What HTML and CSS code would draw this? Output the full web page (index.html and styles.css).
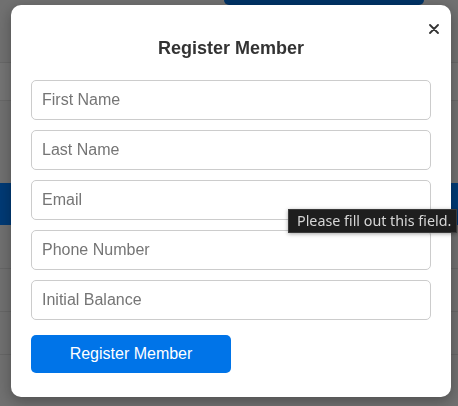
FILE: index.html
```html
<!DOCTYPE html>
<html>
<head>
<meta charset="utf-8">
<link rel="stylesheet" href="styles.css">
</head>
<body>
<div class="page">
  <div class="topbar"><div class="topbtn"></div></div>
  <div class="row-light"></div>
  <div class="gap-area"></div>
  <div class="band"></div>
  <div class="trow"><div class="cell"></div><div class="cell"></div></div>
  <div class="trow"><div class="cell"></div><div class="cell"></div></div>
  <div class="trow"><div class="cell"></div><div class="cell"></div></div>
  <div class="trow"><div class="cell"></div><div class="cell"></div></div>
</div>
<div class="overlay">
  <div class="modal">
    <button class="close" aria-label="Close">
      <svg width="10" height="10" viewBox="0 0 10 10"><path d="M1 1 L9 9 M9 1 L1 9" stroke="#333" stroke-width="1.8" stroke-linecap="round"/></svg>
    </button>
    <h2 class="title">Register Member</h2>
    <form class="form">
      <input class="field" type="text" placeholder="First Name">
      <input class="field" type="text" placeholder="Last Name">
      <input class="field" type="email" placeholder="Email">
      <input class="field" type="text" placeholder="Phone Number">
      <input class="field" type="text" placeholder="Initial Balance">
      <button type="button" class="submit">Register Member</button>
    </form>
  </div>
  <div class="tooltip">Please fill out this field.</div>
</div>
</body>
</html>
```
FILE: styles.css
```css
* { box-sizing: border-box; }
html, body { margin: 0; padding: 0; }
body {
  width: 458px;
  height: 406px;
  overflow: hidden;
  background: #e0e0e0;
  font-family: "Liberation Sans", Arial, sans-serif;
}
.page { width: 458px; height: 406px; overflow: hidden; }
.topbar { height: 62px; }
.topbtn {
  margin-left: 224px;
  width: 200px;
  height: 5px;
  background: #0066cc;
  border-radius: 0 0 6px 6px;
}
.row-light {
  height: 39px;
  border-top: 1px solid #cfcfcf;
  border-bottom: 1px solid #cfcfcf;
  background: #e8e8e8;
}
.gap-area { height: 82px; }
.band { height: 42px; background: #0074ea; }
.trow {
  display: grid;
  grid-template-columns: 292px 1fr;
  height: 43px;
  border-top: 1px solid #cccccc;
}
.band + .trow { border-top: none; }
.cell:first-child { border-right: 1px solid #1a1a1a; }
.overlay {
  position: fixed;
  inset: 0;
  background: rgba(0, 0, 0, 0.5);
}
.modal {
  position: absolute;
  left: 11px;
  top: 5px;
  width: 440px;
  height: 392px;
  background: #fff;
  border-radius: 10px;
  padding: 0 20px;
  box-shadow: 0 4px 14px rgba(0, 0, 0, 0.3);
}
.close {
  position: absolute;
  top: 19px;
  right: 12px;
  width: 10px;
  height: 10px;
  padding: 0;
  border: none;
  background: none;
  display: flex;
}
.title {
  margin: 33px 0 21px;
  font-size: 18px;
  line-height: 21px;
  font-weight: bold;
  color: #333;
  text-align: center;
}
.form { display: flex; flex-direction: column; gap: 10px; }
.field {
  width: 400px;
  height: 40px;
  border: 1px solid #cccccc;
  border-radius: 5px;
  padding: 0 10px;
  font-family: "Liberation Sans", Arial, sans-serif;
  font-size: 16px;
  color: #333;
  background: #fff;
}
.field::placeholder { color: #757575; }
.submit {
  margin-top: 5px;
  width: 200px;
  height: 38px;
  border: none;
  border-radius: 5px;
  background: #0074e8;
  color: #fff;
  font-family: "Liberation Sans", Arial, sans-serif;
  font-size: 16px;
}
.tooltip {
  position: absolute;
  left: 288px;
  top: 209px;
  width: 169px;
  height: 24px;
  padding: 0 0 0 8px;
  background: #1e1e1e;
  border: 1px solid #3a3a3a;
  color: #d6d6d6;
  font-family: "Noto Sans", sans-serif;
  font-size: 14.3px;
  line-height: 22px;
  white-space: nowrap;
  overflow: hidden;
  box-shadow: 0 1px 4px rgba(0, 0, 0, 0.35);
}
```
